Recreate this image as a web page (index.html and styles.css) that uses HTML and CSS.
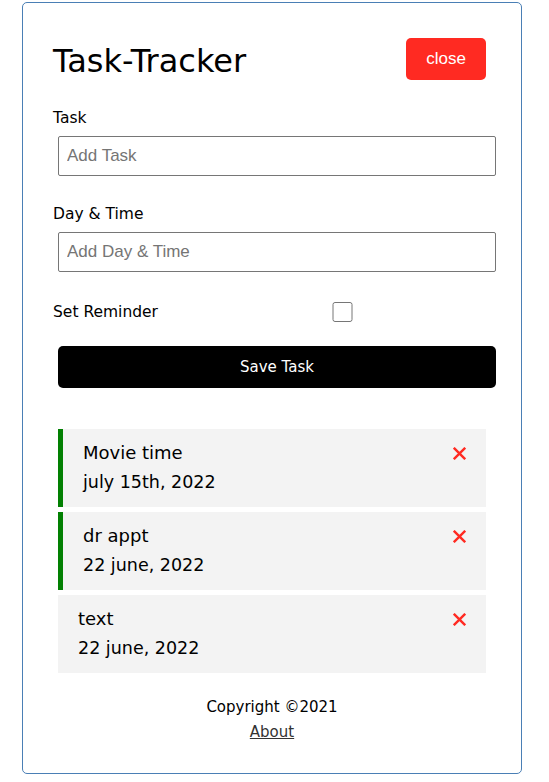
FILE: index.html
```html
<!DOCTYPE html>
<html lang="en">
<head>
<meta charset="utf-8">
<title>Task Tracker</title>
<link rel="stylesheet" href="styles.css">
</head>
<body>
<div class="container">
  <header class="header">
    <h1>Task-Tracker</h1>
    <button class="btn btn-close">close</button>
  </header>
  <form class="add-form">
    <div class="form-control">
      <label>Task</label>
      <input type="text" placeholder="Add Task">
    </div>
    <div class="form-control">
      <label>Day &amp; Time</label>
      <input type="text" placeholder="Add Day &amp; Time">
    </div>
    <div class="form-control form-control-check">
      <label>Set Reminder</label>
      <input type="checkbox">
    </div>
    <button type="button" class="btn btn-block">Save Task</button>
  </form>
  <div class="tasks">
    <div class="task reminder">
      <h3>Movie time <svg class="del" viewBox="0 0 12 12" width="13" height="13"><path d="M1.5 1.5 L10.5 10.5 M10.5 1.5 L1.5 10.5" stroke="currentColor" stroke-width="2.2" stroke-linecap="square"/></svg></h3>
      <p>july 15th, 2022</p>
    </div>
    <div class="task reminder">
      <h3>dr appt <svg class="del" viewBox="0 0 12 12" width="13" height="13"><path d="M1.5 1.5 L10.5 10.5 M10.5 1.5 L1.5 10.5" stroke="currentColor" stroke-width="2.2" stroke-linecap="square"/></svg></h3>
      <p>22 june, 2022</p>
    </div>
    <div class="task">
      <h3>text <svg class="del" viewBox="0 0 12 12" width="13" height="13"><path d="M1.5 1.5 L10.5 10.5 M10.5 1.5 L1.5 10.5" stroke="currentColor" stroke-width="2.2" stroke-linecap="square"/></svg></h3>
      <p>22 june, 2022</p>
    </div>
  </div>
  <footer class="footer">
    <p>Copyright &copy;2021</p>
    <a href="#">About</a>
  </footer>
</div>
</body>
</html>
```
FILE: styles.css
```css
* { box-sizing: border-box; }
body {
  margin: 0;
  font-family: "DejaVu Sans", "Open Sans", sans-serif;
  color: #000;
  background: #fff;
}
.container {
  width: 500px;
  height: 772px;
  margin: 2px 0 0 22px;
  border: 1px solid #4a7fb5;
  border-radius: 5px;
  padding: 30px;
}
.header {
  display: flex;
  justify-content: space-between;
  align-items: center;
  margin-bottom: 20px;
}
.header h1 {
  margin: 0;
  padding-top: 4px;
  font-size: 32px;
  font-weight: 400;
  line-height: 40px;
}
.btn {
  display: inline-block;
  border: none;
  border-radius: 5px;
  margin: 5px;
  padding: 10px 20px;
  color: #fff;
  cursor: pointer;
}
.btn-close {
  background: #ff2a22;
  font-family: "Liberation Sans", Arial, sans-serif;
  font-size: 17px;
  line-height: 22px;
}
.form-control {
  display: flow-root;
  margin: 20px 0;
}
.form-control label {
  display: block;
  font-size: 15.5px;
  line-height: 26px;
}
.form-control input[type="text"] {
  display: block;
  width: 438px;
  height: 40px;
  margin: 5px;
  padding: 3px 8px;
  font-family: "Liberation Sans", Arial, sans-serif;
  font-size: 17px;
  border: 1px solid #767676;
  border-radius: 2px;
}
.form-control input::placeholder { color: #757575; }
.form-control-check {
  display: flex;
  align-items: center;
  justify-content: space-between;
  padding-top: 2px;
}
.form-control-check label { flex: 1; }
.form-control-check input {
  flex: 2;
  height: 20px;
  margin: 0 4px 0 0;
}
.btn-block {
  display: block;
  width: 438px;
  height: 42px;
  margin: 21px 5px 5px;
  background: #000;
  font-family: inherit;
  font-size: 15px;
}
.tasks { margin-top: 41px; }
.task {
  background: #f3f3f3;
  margin: 5px;
  padding: 10px 20px;
  height: 78px;
}
.task.reminder { border-left: 5px solid #028002; }
.task h3 {
  display: flex;
  justify-content: space-between;
  align-items: center;
  margin: 0;
  font-size: 18px;
  font-weight: 400;
  line-height: 28px;
}
.task .del { color: #ff2a22; }
.task p {
  margin: 0;
  font-size: 17.5px;
  line-height: 31px;
}
.footer {
  margin-top: 22px;
  text-align: center;
  font-size: 15px;
}
.footer p { margin: 0; line-height: 25px; }
.footer a { color: #333; line-height: 25px; }
```
